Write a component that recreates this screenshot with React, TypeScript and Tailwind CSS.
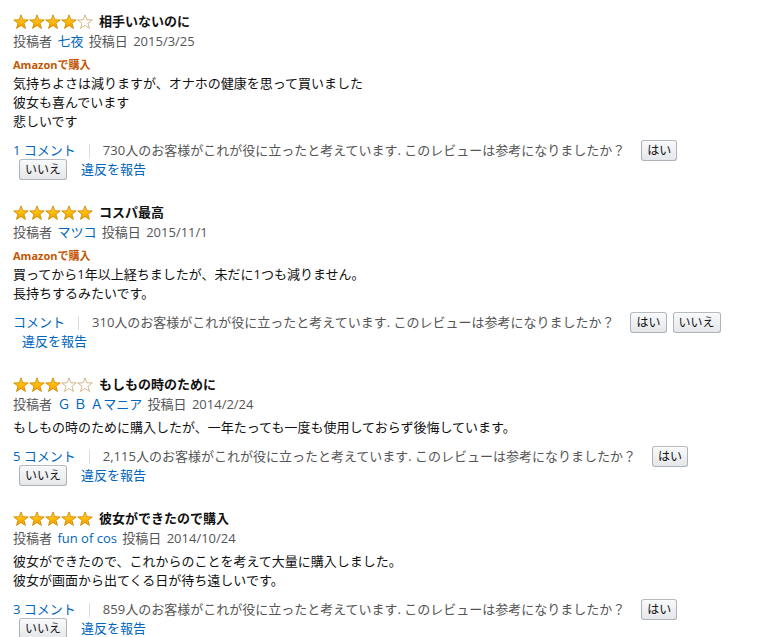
import React from "react";

type Review = {
  stars: number;
  title: string;
  author: string;
  date: string;
  amazon: boolean;
  body: string[];
  comments: string;
  helpful: string;
  bothButtonsFirstRow: boolean;
};

const reviews: Review[] = [
  {
    stars: 4,
    title: "相手いないのに",
    author: "七夜",
    date: "2015/3/25",
    amazon: true,
    body: ["気持ちよさは減りますが、オナホの健康を思って買いました", "彼女も喜んでいます", "悲しいです"],
    comments: "1 コメント",
    helpful: "730",
    bothButtonsFirstRow: false,
  },
  {
    stars: 5,
    title: "コスパ最高",
    author: "マツコ",
    date: "2015/11/1",
    amazon: true,
    body: ["買ってから1年以上経ちましたが、未だに1つも減りません。", "長持ちするみたいです。"],
    comments: "コメント",
    helpful: "310",
    bothButtonsFirstRow: true,
  },
  {
    stars: 3,
    title: "もしもの時のために",
    author: "Ｇ Ｂ Ａマニア",
    date: "2014/2/24",
    amazon: false,
    body: ["もしもの時のために購入したが、一年たっても一度も使用しておらず後悔しています。"],
    comments: "5 コメント",
    helpful: "2,115",
    bothButtonsFirstRow: false,
  },
  {
    stars: 5,
    title: "彼女ができたので購入",
    author: "fun of cos",
    date: "2014/10/24",
    amazon: false,
    body: ["彼女ができたので、これからのことを考えて大量に購入しました。", "彼女が画面から出てくる日が待ち遠しいです。"],
    comments: "3 コメント",
    helpful: "859",
    bothButtonsFirstRow: false,
  },
];

const STAR_POINTS =
  "8,0.9 9.82,5.79 15.23,5.95 10.95,9.26 12.47,14.45 8,11.4 3.53,14.45 5.05,9.26 0.77,5.95 6.18,5.79";

function Star({ filled, id }: { filled: boolean; id: string }) {
  return (
    <svg width="16" height="16" viewBox="0 0 16 16" className="block">
      <defs>
        <linearGradient id={id} x1="0" y1="0" x2="0" y2="1">
          <stop offset="0" stopColor="#ffd64a" />
          <stop offset="0.55" stopColor="#ffb800" />
          <stop offset="1" stopColor="#f29a00" />
        </linearGradient>
      </defs>
      <polygon
        points={STAR_POINTS}
        fill={filled ? `url(#${id})` : "#ffffff"}
        stroke={filled ? "#d48a00" : "#c9a46a"}
        strokeWidth={filled ? 0.9 : 0.8}
        strokeLinejoin="round"
      />
    </svg>
  );
}

function Stars({ n, k }: { n: number; k: number }) {
  return (
    <div className="flex items-center">
      {[0, 1, 2, 3, 4].map((i) => (
        <Star key={i} filled={i < n} id={`sg-${k}-${i}`} />
      ))}
    </div>
  );
}

function Btn({ children, className = "" }: { children: React.ReactNode; className?: string }) {
  return (
    <span
      className={
        "inline-flex h-[21px] -my-px items-center rounded-[3px] border border-[#adb1b8] border-t-[#b6b9be] bg-gradient-to-b from-[#f8f9fa] to-[#e5e7ea] px-[5px] text-[12px] leading-none text-[#111] shadow-[inset_0_1px_0_rgba(255,255,255,0.6)] " +
        className
      }
    >
      {children}
    </span>
  );
}

function ReviewItem({ r, k }: { r: Review; k: number }) {
  return (
    <div className="mb-[23px]">
      <div className="flex h-[21px] items-center">
        <Stars n={r.stars} k={k} />
        <span className="ml-[6px] text-[13px] font-bold text-[#111]">{r.title}</span>
      </div>
      <div className="h-[19px] text-[13px] leading-[19px] text-[#555] [word-spacing:2px]">
        投稿者 <span className="text-[#0066c0] [word-spacing:normal]">{r.author}</span> 投稿日 {r.date}
      </div>
      {r.amazon && (
        <div className="mt-[4px] h-[19px] text-[11px] font-bold leading-[19px] text-[#c45500]">Amazonで購入</div>
      )}
      <div className={(r.amazon ? "" : "mt-[4px] ") + "text-[13px] leading-[19px] text-[#111]"}>
        {r.body.map((l, i) => (
          <div key={i}>{l}</div>
        ))}
      </div>
      <div className="mt-[10px] text-[13px] leading-[19px]">
        <div className="flex h-[19px] items-center">
          <span className="text-[#0066c0]">{r.comments}</span>
          <span className="mx-[13px] h-[14px] w-px bg-[#dddddd]" />
          <span className="text-[#555]">
            {r.helpful}人のお客様がこれが役に立ったと考えています. このレビューは参考になりましたか？
          </span>
          <Btn className="ml-[16px]">はい</Btn>
          {r.bothButtonsFirstRow && <Btn className="ml-[6px]">いいえ</Btn>}
        </div>
        <div className="flex h-[19px] items-center">
          {!r.bothButtonsFirstRow && <Btn className="ml-[6px] mr-[5px]">いいえ</Btn>}
          <span className="ml-[9px] text-[#0066c0]">違反を報告</span>
        </div>
      </div>
    </div>
  );
}

export default function App() {
  return (
    <div
      className="min-h-[637px] w-[763px] bg-white pl-[13px] pr-[30px] pt-[11px]"
      style={{ fontFamily: '"Open Sans", "Noto Sans CJK JP", sans-serif' }}
    >
      {reviews.map((r, i) => (
        <ReviewItem key={i} r={r} k={i} />
      ))}
    </div>
  );
}
